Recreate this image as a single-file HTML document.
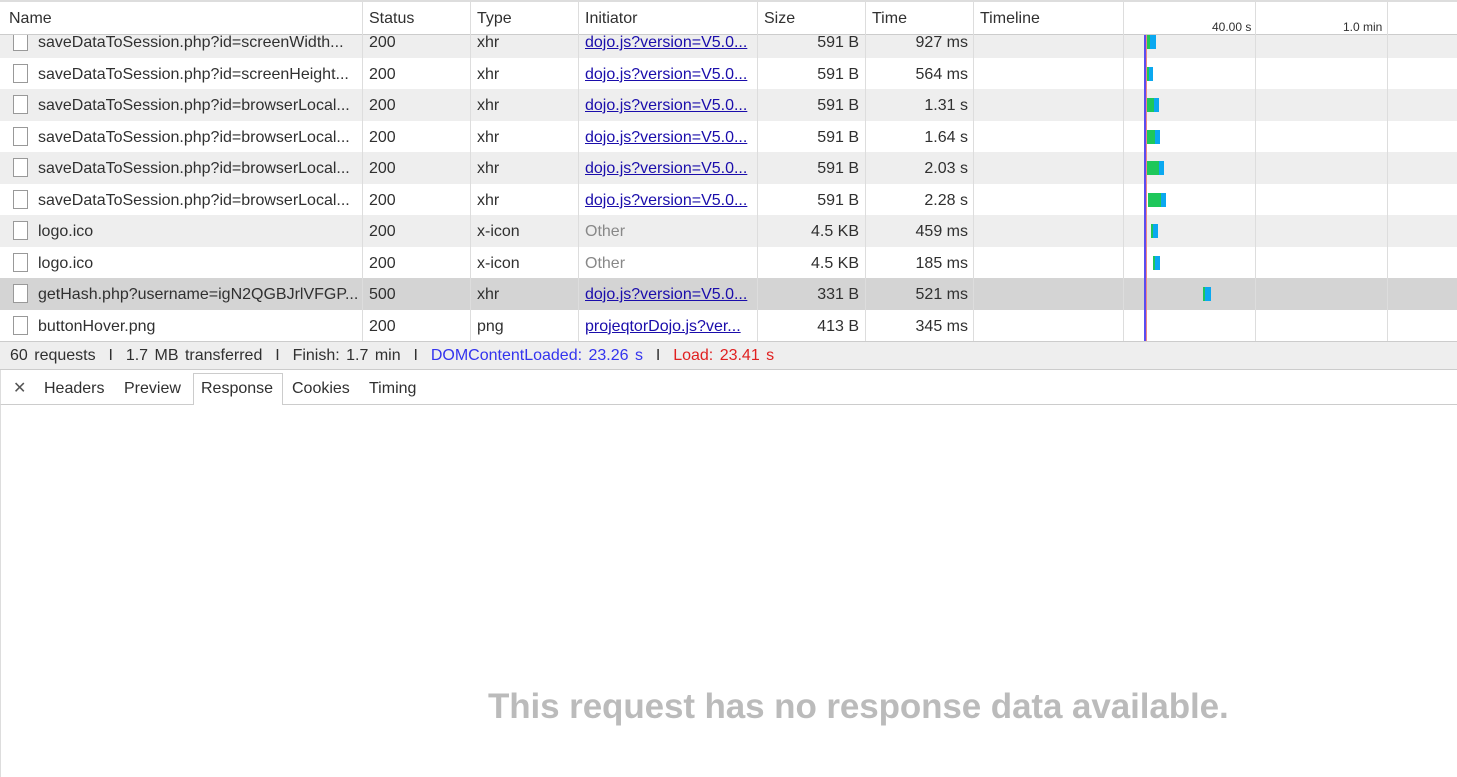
<!DOCTYPE html><html><head><style>
body{margin:0;width:1457px;height:777px;overflow:hidden;background:#fff;font-family:"Liberation Sans",sans-serif;font-size:16px;color:#303030;position:relative}
.a{position:absolute;white-space:nowrap}
.hdr{position:absolute;left:0;top:0;width:1457px;height:35px;background:#fff;border-top:2px solid #ddd;border-bottom:1px solid #ccc;box-sizing:border-box;z-index:2}
.row{position:absolute;left:0;width:1457px;height:31.5px}
.v{position:absolute;top:0;width:1px;height:341px;background:#ddd;z-index:3}
.ic{position:absolute;left:13px;width:15px;height:19px;border:1px solid #999;background:#fff;box-sizing:border-box}
a{color:#1a0dab;text-decoration:underline}
.bar{position:absolute;height:14px}
</style></head><body>
<div class="hdr">
<span class="a" style="left:9px;top:8px">Name</span>
<span class="a" style="left:369px;top:8px">Status</span>
<span class="a" style="left:477px;top:8px">Type</span>
<span class="a" style="left:585px;top:8px">Initiator</span>
<span class="a" style="left:764px;top:8px">Size</span>
<span class="a" style="left:872px;top:8px">Time</span>
<span class="a" style="left:980px;top:8px">Timeline</span>
<span class="a" style="left:1212px;top:18px;font-size:12px">40.00 s</span>
<span class="a" style="left:1343px;top:18px;font-size:12px">1.0 min</span>
</div>
<div id="rows"></div>
<div class="v" style="left:362px"></div><div class="v" style="left:470px"></div><div class="v" style="left:578px"></div><div class="v" style="left:757px"></div><div class="v" style="left:865px"></div><div class="v" style="left:973px"></div><div class="v" style="left:1123px"></div><div class="v" style="left:1255px"></div><div class="v" style="left:1387px"></div>
<div class="a" style="left:1144px;top:35px;width:2px;height:306px;background:#5b4cf0;z-index:4"></div>
<div class="a" style="left:1146px;top:35px;width:1px;height:306px;background:#e88;z-index:4"></div>
<div class="a" style="left:0;top:341px;width:1457px;height:29px;background:#eee;border-top:1px solid #ccc;border-bottom:1px solid #ccc;box-sizing:border-box;z-index:5"><span class="a" style="left:10px;top:5px;word-spacing:2px">60 requests &nbsp;I&nbsp; 1.7 MB transferred &nbsp;I&nbsp; Finish: 1.7 min &nbsp;I&nbsp; <span style="color:#3333ee">DOMContentLoaded: 23.26 s</span> &nbsp;I&nbsp; <span style="color:#e02020">Load: 23.41 s</span></span></div>
<div class="a" style="left:0;top:370px;width:1457px;height:35px;border-bottom:1px solid #ccc;box-sizing:border-box;border-left:1px solid #ddd">
<span class="a" style="left:12px;top:8px;color:#555">✕</span>
<span class="a" style="left:43px;top:10px">Headers</span>
<span class="a" style="left:123px;top:10px">Preview</span>
<span class="a" style="left:192px;top:3px;width:90px;height:32px;border:1px solid #ccc;border-bottom:none;box-sizing:border-box;background:#fff"></span>
<span class="a" style="left:200px;top:10px">Response</span>
<span class="a" style="left:291px;top:10px">Cookies</span>
<span class="a" style="left:368px;top:10px">Timing</span>
</div>
<div class="a" style="left:0;top:405px;width:1px;height:372px;background:#ddd"></div>
<div class="a" style="left:488px;top:687px;font-size:35px;font-weight:bold;color:#bbb;letter-spacing:-0.1px">This request has no response data available.</div>
<script>
const d=[
["saveDataToSession.php?id=screenWidth...","200","xhr",1,"591 B","927 ms",[1146,4,1150,6]],
["saveDataToSession.php?id=screenHeight...","200","xhr",1,"591 B","564 ms",[1146,3,1149,4]],
["saveDataToSession.php?id=browserLocal...","200","xhr",1,"591 B","1.31 s",[1146,8,1154,5]],
["saveDataToSession.php?id=browserLocal...","200","xhr",1,"591 B","1.64 s",[1147,8,1155,5]],
["saveDataToSession.php?id=browserLocal...","200","xhr",1,"591 B","2.03 s",[1147,12,1159,5]],
["saveDataToSession.php?id=browserLocal...","200","xhr",1,"591 B","2.28 s",[1148,13,1161,5]],
["logo.ico","200","x-icon",0,"4.5 KB","459 ms",[1151,2,1153,5]],
["logo.ico","200","x-icon",0,"4.5 KB","185 ms",[1153,2,1155,5]],
["getHash.php?username=igN2QGBJrlVFGP...","500","xhr",1,"331 B","521 ms",[1203,2,1205,6]],
["buttonHover.png","200","png",2,"413 B","345 ms",[]]];
let h="";d.forEach((r,i)=>{const t=26+31.5*i;const bg=i==8?"#d4d4d4":(i%2==0?"#eee":"#fff");
const ini=r[3]==1?'<a>dojo.js?version=V5.0...</a>':r[3]==2?'<a>projeqtorDojo.js?ver...</a>':'<span style="color:#888">Other</span>';
let b=r[6].length?`<div class="bar" style="left:${r[6][0]}px;top:9px;width:${r[6][1]}px;background:#1ec75a"></div><div class="bar" style="left:${r[6][2]}px;top:9px;width:${r[6][3]}px;background:#0aa8f0"></div>`:"";
h+=`<div class="row" style="top:${t}px;background:${bg}"><div class="ic" style="top:6px"></div><span class="a" style="left:38px;top:8px">${r[0]}</span><span class="a" style="left:369px;top:8px">${r[1]}</span><span class="a" style="left:477px;top:8px">${r[2]}</span><span class="a" style="left:585px;top:8px">${ini}</span><span class="a" style="right:598px;top:8px">${r[4]}</span><span class="a" style="right:489px;top:8px">${r[5]}</span>${b}</div>`});
document.getElementById("rows").innerHTML=h;
</script>
</body></html>
